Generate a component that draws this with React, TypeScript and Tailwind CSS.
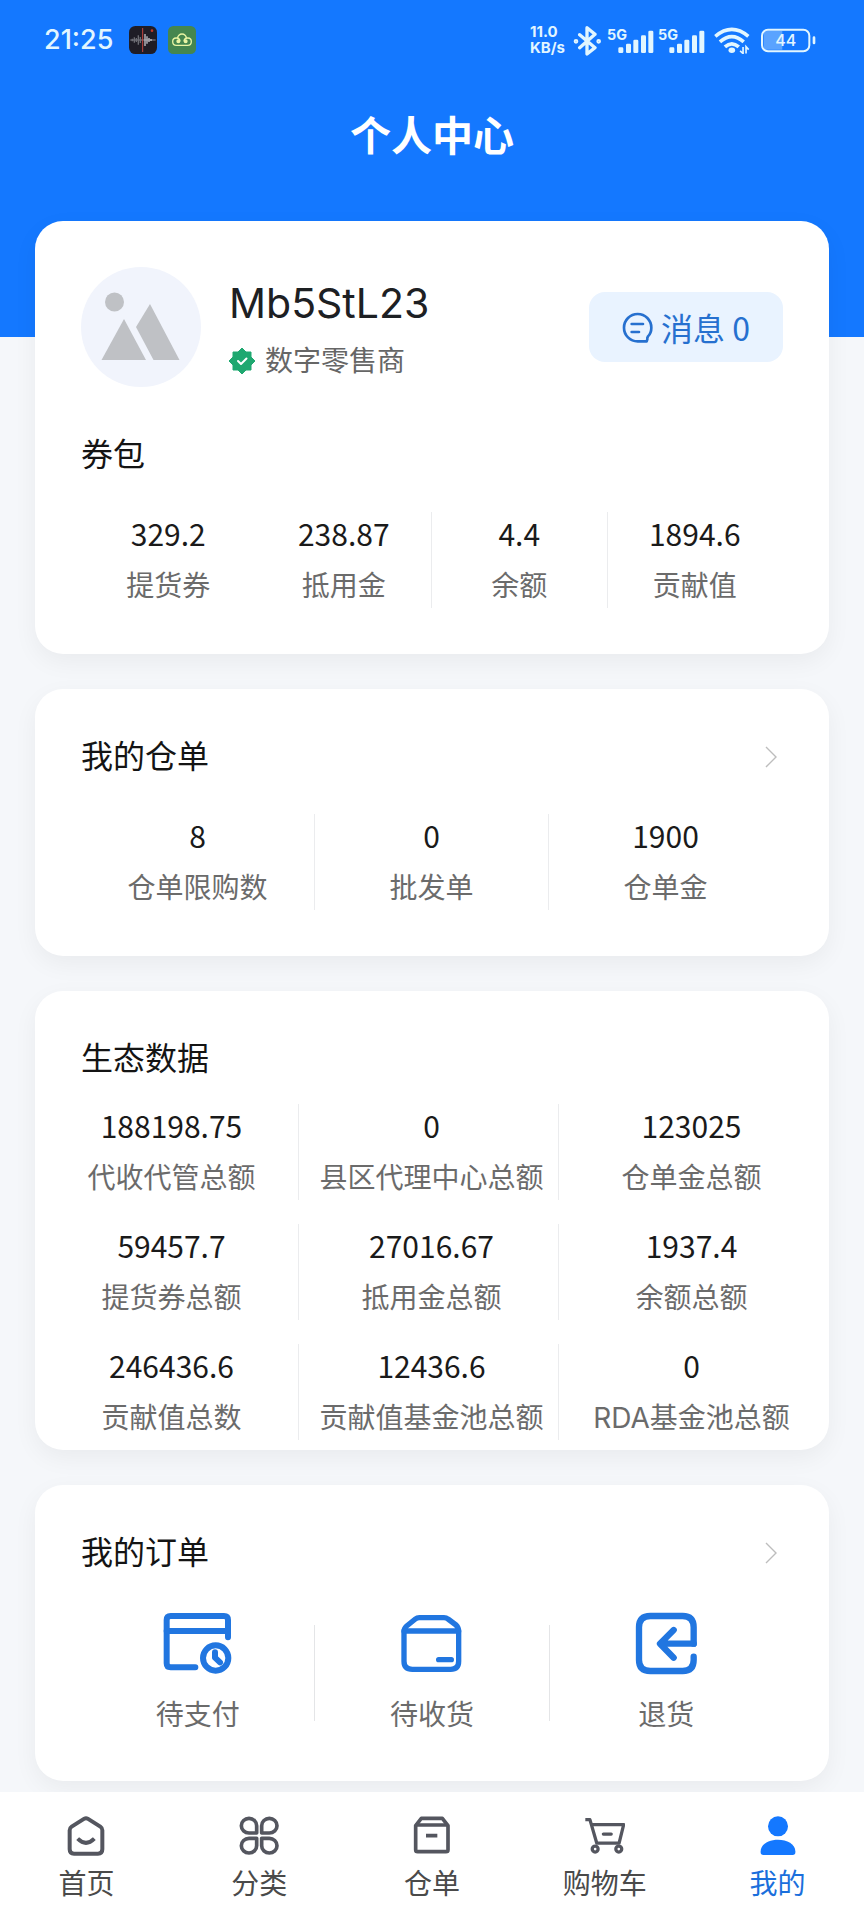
import React from "react";
import clsx from "clsx";

interface Stat {
    label: string;
    value: string;
}

interface IconItem {
    label: string;
    icon: React.ReactNode;
}

const wallet: Stat[] = [
    { label: "提货券", value: "329.2" },
    { label: "抵用金", value: "238.87" },
    { label: "余额", value: "4.4" },
    { label: "贡献值", value: "1894.6" },
];

const warehouse: Stat[] = [
    { label: "仓单限购数", value: "8" },
    { label: "批发单", value: "0" },
    { label: "仓单金", value: "1900" },
];

const ecology: Stat[] = [
    { label: "代收代管总额", value: "188198.75" },
    { label: "县区代理中心总额", value: "0" },
    { label: "仓单金总额", value: "123025" },
    { label: "提货券总额", value: "59457.7" },
    { label: "抵用金总额", value: "27016.67" },
    { label: "余额总额", value: "1937.4" },
    { label: "贡献值总数", value: "246436.6" },
    { label: "贡献值基金池总额", value: "12436.6" },
    { label: "RDA基金池总额", value: "0" },
];

const orders: IconItem[] = [
    {
        label: "待支付",
        icon: (
            <svg viewBox="394 390 213 198" className="w-[71px] h-[66px]" fill="none" stroke="currentColor" strokeWidth="18" strokeLinecap="round" strokeLinejoin="round">
                <path d="M592 472V420Q592 408 580 408H420Q408 408 408 420V550Q408 562 420 562H494" />
                <path d="M408 453H592" />
                <circle cx="555" cy="534" r="38" />
                <path d="M553 517V533L568 547" />
            </svg>
        ),
    },
    {
        label: "待收货",
        icon: (
            <svg viewBox="1100 390 213 198" className="w-[71px] h-[66px]" fill="none" stroke="currentColor" strokeWidth="16" strokeLinecap="round" strokeLinejoin="round">
                <path d="M1124 455Q1124 445 1132 438L1158 417Q1163 413 1170 413H1244Q1251 413 1256 417L1280 435Q1288 443 1288 455V544Q1288 568 1264 568H1149Q1124 568 1124 544Z" />
                <path d="M1124 453H1288M1228 539H1266" />
            </svg>
        ),
    },
    {
        label: "退货",
        icon: (
            <svg viewBox="597 390 213 198" className="w-[71px] h-[66px]" fill="none" stroke="currentColor" strokeWidth="19" strokeLinecap="round" strokeLinejoin="round">
                <path d="M785 491V442Q785 408 752 408H655Q621 408 621 442V540Q621 573 655 573H752Q785 573 785 540V530" />
                <path d="M785 491H687M725 450L684 491L725 533" />
            </svg>
        ),
    },
];

const tabs: IconItem[] = [
    {
        label: "首页",
        icon: (
            <svg viewBox="202 106 120 120" className="size-10" fill="none" stroke="currentColor" strokeWidth="12" strokeLinejoin="round">
                <path d="M257 114Q262 111 267 114L305 138Q311 142 311 149V206Q311 219 298 219H226Q213 219 213 206V149Q213 142 219 138Z" />
                <path d="M237 174Q262 199 287 174" />
            </svg>
        ),
    },
    {
        label: "分类",
        icon: (
            <svg viewBox="718 106 120 120" className="size-10" fill="none" stroke="currentColor" strokeWidth="11" strokeLinejoin="round">
                <path d="M771 157H748A23 22 0 1 1 771 135Z" />
                <path d="M786 157V135A23 22 0 1 1 809 157Z" />
                <path d="M771 173V195A23 22 0 1 1 748 173Z" />
                <path d="M786 173H809A23 22 0 1 1 786 195Z" />
            </svg>
        ),
    },
    {
        label: "仓单",
        icon: (
            <svg viewBox="1236 106 120 120" className="size-10" fill="none" stroke="currentColor" strokeWidth="11" strokeLinejoin="round">
                <path d="M1247 135L1264 113H1327L1344 135V207Q1344 213 1338 213H1253Q1247 213 1247 207Z" />
                <path d="M1247 133H1344M1278 165H1312" />
            </svg>
        ),
    },
    {
        label: "购物车",
        icon: (
            <svg viewBox="458 106 122 120" className="size-10" fill="none" stroke="currentColor" strokeWidth="10" strokeLinejoin="round">
                <path d="M459 116H473L494 188H562L576 131H478" />
                <path d="M514 160H538" strokeLinecap="round" />
                <circle cx="489" cy="206" r="9" />
                <circle cx="561" cy="206" r="9" />
            </svg>
        ),
    },
    {
        label: "我的",
        icon: (
            <svg viewBox="979 106 120 120" className="size-10" fill="currentColor">
                <circle cx="1039" cy="137" r="30" />
                <path d="M987 212C987 190 1012 177 1039 177S1091 190 1091 212V215Q1091 223 1083 223H995Q987 223 987 215Z" />
            </svg>
        ),
    },
];

function Signal() {
    return (
        <svg viewBox="322 75 141 81" className="w-[47px] h-[27px]" fill="currentColor">
            <text x="322" y="115" fontSize="43" fontWeight="700">5G</text>
            <rect x="356" y="136" width="15" height="17" rx="4" />
            <rect x="379" y="125" width="15" height="28" rx="4" />
            <rect x="401" y="113" width="15" height="40" rx="4" />
            <rect x="424" y="100" width="15" height="53" rx="4" />
            <rect x="446" y="86" width="15" height="67" rx="4" />
        </svg>
    );
}

function StatusBar() {
    return (
        <div className="flex h-20 items-center justify-between pl-11 pr-12 text-[#e2f6ff]">
            <div className="flex items-center">
                <span className="mr-4 text-[27px] font-medium">21:25</span>
                <svg viewBox="0 0 84 84" className="mr-[11px] size-7">
                    <rect width="84" height="84" rx="19" fill="#1f1d26" />
                    <path d="M4 42H80" stroke="#8d8d96" strokeWidth="3" />
                    <path d="M10 38V46M16 34V50M22 36V48M28 28V56M34 33V51" stroke="#6d6d74" strokeWidth="4" />
                    <path d="M48 24V60M54 31V53M60 36V48M66 39V45" stroke="#c3c3ca" strokeWidth="4" />
                    <path d="M41 6V78" stroke="#c4473f" strokeWidth="3" />
                    <circle cx="69" cy="14" r="4" fill="#c0392b" />
                </svg>
                <svg viewBox="0 0 84 84" className="size-7" fill="none" stroke="#e9f5a4" strokeWidth="4">
                    <rect width="84" height="84" rx="16" fill="#45864f" stroke="none" />
                    <path d="M29 36A13 12 0 1 1 55 36" />
                    <path d="M25 58A11 11 0 1 1 36 46M48 46A11 11 0 1 1 59 58H25" />
                    <circle cx="31" cy="46" r="4" fill="#e9f5a4" />
                    <circle cx="53" cy="46" r="4" fill="#e9f5a4" />
                </svg>
            </div>

            <div className="flex items-center">
                <div className="mr-2 text-[15px] leading-[16px] font-bold">
                    <div>11.0</div>
                    <div>KB/s</div>
                </div>
                <svg viewBox="220 69 84 93" className="mr-[6px] w-7 h-[31px]" fill="none" stroke="currentColor" strokeWidth="10" strokeLinejoin="round" strokeLinecap="round">
                    <path d="M240 98L286 137L262 156V77L286 97L240 137" />
                    <circle cx="229" cy="118" r="4" strokeWidth="6" />
                    <circle cx="297" cy="118" r="4" strokeWidth="6" />
                </svg>
                <span className="mr-1 flex gap-1">
                    <Signal />
                    <Signal />
                </span>
                <svg viewBox="638 76 112 84" className="ml-1 mr-[11px] w-[37px] h-7" fill="none" stroke="currentColor" strokeWidth="11">
                    <path d="M645 107Q695 65 745 107" />
                    <path d="M659 124Q695 92 731 124" />
                    <path d="M674 139Q695 120 716 139" />
                    <ellipse cx="695" cy="149" rx="10" ry="8" fill="currentColor" stroke="none" />
                    <path d="M729 139V159L720 151M738 159V138L746 147" strokeWidth="5" />
                </svg>
                <svg viewBox="782 78 165 78" className="w-[55px] h-[26px]" fill="none" stroke="currentColor">
                    <path d="M790 98Q790 90 798 90H846V146H798Q790 146 790 138Z" fill="#5aa3ff" stroke="none" />
                    <rect x="785" y="86" width="142" height="65" rx="18" strokeWidth="6" />
                    <path d="M941 110V126" strokeWidth="8" strokeLinecap="round" />
                    <text x="856" y="136" fontSize="48" fontWeight="500" textAnchor="middle" fill="currentColor" stroke="none">44</text>
                </svg>
            </div>
        </div>
    );
}

function StatCell({ label, value, divider }: Stat & { divider: boolean }) {
    return (
        <div className={clsx("h-24 text-center whitespace-nowrap border-r", divider ? "border-[#ebecee]" : "border-transparent")}>
            <div className="font-['Noto_Sans_CJK_SC',sans-serif] text-[30px] leading-[42px] text-[#1a1a1a]">{value}</div>
            <div className="mt-3 text-[28px] leading-[40px] text-[#6b6b6b]">{label}</div>
        </div>
    );
}

function SectionTitle({ title, href }: { title: string; href?: string }) {
    if (!href) {
        return <h2 className="text-[32px] leading-[48px] text-[#141414]">{title}</h2>;
    }
    return (
        <a href={href} className="flex items-center justify-between">
            <h2 className="text-[32px] leading-[48px] text-[#141414]">{title}</h2>
            <svg viewBox="0 0 12 22" className="mr-[6px] w-3 h-[22px]" fill="none" stroke="#bdbdbd" strokeWidth="1.4">
                <path d="M1 1L11 11L1 21" />
            </svg>
        </a>
    );
}

export default function App() {
    return (
        <div className="min-h-screen bg-[#f5f7fa] font-[Inter,'Noto_Sans_CJK_SC',sans-serif]">
            <header className="bg-[#1478ff] pb-[143px]">
                <StatusBar />
                <h1 className="flex h-[114px] items-center justify-center text-[41px] font-bold text-white">个人中心</h1>
            </header>

            <main className="-mt-[116px] flex flex-col gap-[35px] px-[35px] pb-[11px]">
                <section className="rounded-[28px] bg-white p-[46px] shadow-[0_8px_24px_rgba(0,0,0,0.05)]">
                    <div className="flex items-center">
                        <svg viewBox="0 0 120 120" className="size-[120px] shrink-0">
                            <circle cx="60" cy="60" r="60" fill="#f1f4fc" />
                            <g fill="#bfc1c5">
                                <circle cx="33.5" cy="35" r="9.5" />
                                <path d="M20.5 93L43 52L65 93Z" />
                                <path d="M55 60L69 37L98.5 93H72.5Z" />
                            </g>
                        </svg>
                        <div className="ml-7 flex-1">
                            <div className="text-[41px] leading-[64px] text-[#1d2023]">Mb5StL23</div>
                            <div className="mt-1 flex items-center gap-[10px] text-[28px] leading-[44px] text-[#666]">
                                <svg viewBox="0 0 26 26" className="size-[26px]">
                                    <path d="M13 0L17 4H22V9L26 13L22 17V22H17L13 26L9 22H4V17L0 13L4 9V4H9Z" fill="#1fa870" stroke="#1fa870" strokeLinejoin="round" />
                                    <path d="M9 13L12 16L17.5 10.5" fill="none" stroke="#fff" strokeWidth="2" strokeLinecap="round" strokeLinejoin="round" />
                                </svg>
                                数字零售商
                            </div>
                        </div>
                        <button className="flex h-[70px] w-[194px] items-center justify-center gap-2 rounded-2xl bg-[#e9f3ff] font-['Noto_Sans_CJK_SC',sans-serif] text-[32px] text-[#2670cf]">
                            <svg viewBox="577 306 93 93" className="size-[31px]" fill="none" stroke="currentColor" strokeWidth="8" strokeLinecap="round" strokeLinejoin="round">
                                <path d="M651 394H624A41 41 0 1 1 665 353Q665 369 655 379Q652 383 653 388Z" />
                                <path d="M606 342H640M606 366H628" />
                            </svg>
                            消息 0
                        </button>
                    </div>

                    <div className="mt-[44px]">
                        <SectionTitle title="券包" />
                    </div>
                    <div className="mt-[33px] grid grid-cols-4">
                        {wallet.map((item, index) => (
                            <StatCell key={item.label} {...item} divider={index === 1 || index === 2} />
                        ))}
                    </div>
                </section>

                <section className="rounded-[28px] bg-white px-[46px] pt-[44px] pb-[46px] shadow-[0_8px_24px_rgba(0,0,0,0.05)]">
                    <SectionTitle title="我的仓单" href="#warehouse" />
                    <div className="mt-[33px] grid grid-cols-3">
                        {warehouse.map((item, index) => (
                            <StatCell key={item.label} {...item} divider={index < 2} />
                        ))}
                    </div>
                </section>

                <section className="rounded-[28px] bg-white px-[10px] pt-[44px] pb-[10px] shadow-[0_8px_24px_rgba(0,0,0,0.05)]">
                    <div className="px-9">
                        <SectionTitle title="生态数据" />
                    </div>
                    <div className="mt-[21px] grid grid-cols-3 gap-x-[6px] gap-y-6">
                        {ecology.map((item, index) => (
                            <StatCell key={item.label} {...item} divider={index % 3 < 2} />
                        ))}
                    </div>
                </section>

                <section className="rounded-[28px] bg-white px-[46px] pt-[44px] pb-[46px] shadow-[0_8px_24px_rgba(0,0,0,0.05)]">
                    <SectionTitle title="我的订单" href="#orders" />
                    <div className="mt-[33px] flex items-center">
                        {orders.map((item, index) => (
                            <React.Fragment key={item.label}>
                                {index > 0 && <span className="h-24 w-px bg-[#e4e5e7]" />}
                                <a href="#orders" className="flex flex-1 flex-col items-center text-[#2176e0]">
                                    {item.icon}
                                    <span className="mt-[19px] text-[28px] leading-[40px] text-[#6b6b6b]">{item.label}</span>
                                </a>
                            </React.Fragment>
                        ))}
                    </div>
                </section>
            </main>

            <nav className="sticky bottom-0 grid grid-cols-5 bg-white pt-6 pb-[14px]">
                {tabs.map((tab) => {
                    const active = tab.label === "我的";
                    return (
                        <a key={tab.label} href="#" className={clsx("flex flex-col items-center", active ? "text-[#1478ff]" : "text-[#54565f]")}>
                            {tab.icon}
                            <span className={clsx("mt-[6px] text-[28px] leading-[44px]", active ? "text-[#1b6fdc]" : "text-[#4a4a4a]")}>{tab.label}</span>
                        </a>
                    );
                })}
            </nav>
        </div>
    );
}
